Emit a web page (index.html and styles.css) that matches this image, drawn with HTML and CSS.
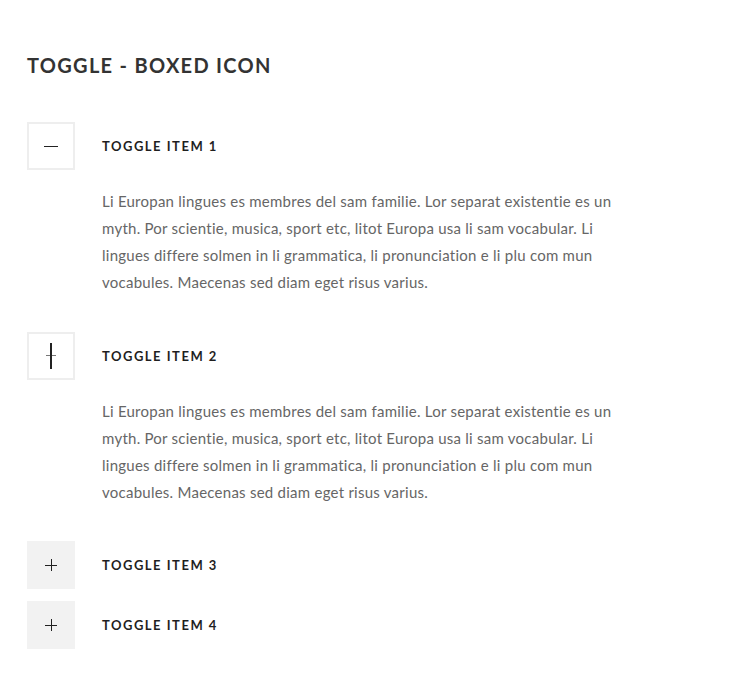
FILE: index.html
```html
<!DOCTYPE html>
<html lang="en">
<head>
<meta charset="utf-8">
<title>Toggle - Boxed Icon</title>
<link rel="stylesheet" href="styles.css">
</head>
<body>
<main class="page">
  <h2 class="heading">TOGGLE - BOXED ICON</h2>
  <div class="toggles">
    <div class="item open">
      <div class="head">
        <span class="box"><span class="icon minus"></span></span>
        <span class="title">TOGGLE ITEM 1</span>
      </div>
      <div class="content">
        <p>Li Europan lingues es membres del sam familie. Lor separat existentie es un myth. Por scientie, musica, sport etc, litot Europa usa li sam vocabular. Li lingues differe solmen in li grammatica, li pronunciation e li plu com mun vocabules. Maecenas sed diam eget risus varius.</p>
      </div>
    </div>
    <div class="item open">
      <div class="head">
        <span class="box"><span class="icon turning"></span></span>
        <span class="title">TOGGLE ITEM 2</span>
      </div>
      <div class="content">
        <p>Li Europan lingues es membres del sam familie. Lor separat existentie es un myth. Por scientie, musica, sport etc, litot Europa usa li sam vocabular. Li lingues differe solmen in li grammatica, li pronunciation e li plu com mun vocabules. Maecenas sed diam eget risus varius.</p>
      </div>
    </div>
    <div class="item">
      <div class="head">
        <span class="box"><span class="icon plus"></span></span>
        <span class="title">TOGGLE ITEM 3</span>
      </div>
    </div>
    <div class="item">
      <div class="head">
        <span class="box"><span class="icon plus"></span></span>
        <span class="title">TOGGLE ITEM 4</span>
      </div>
    </div>
  </div>
</main>
</body>
</html>
```
FILE: styles.css
```css
html, body {
  margin: 0;
  padding: 0;
  background: #ffffff;
}
body {
  font-family: Lato, "Open Sans", sans-serif;
  font-variant-ligatures: none;
}
.page {
  padding: 51px 27px 20px 27px;
}
.heading {
  margin: 0;
  font-size: 20px;
  line-height: 28px;
  font-weight: 700;
  letter-spacing: 1.3px;
  color: #333333;
}
.toggles {
  margin-top: 43px;
}
.item {
  margin-bottom: 12px;
}
.head {
  display: flex;
  align-items: center;
  gap: 27px;
}
.box {
  width: 48px;
  height: 48px;
  box-sizing: border-box;
  background: #f2f2f2;
  position: relative;
  flex: none;
}
.item.open .box {
  background: #ffffff;
  border: 2px solid #eeeeee;
}
.icon {
  position: absolute;
  left: 50%;
  top: 50%;
  width: 12px;
  height: 12px;
  transform: translate(-50%, -50%);
}
.icon::before,
.icon::after {
  content: "";
  position: absolute;
  background: #222222;
}
.icon::before {
  left: 0;
  right: 0;
  top: 50%;
  height: 1px;
  margin-top: -0.5px;
}
.icon::after {
  top: 0;
  bottom: 0;
  left: 50%;
  width: 1px;
  margin-left: -0.5px;
}
.icon.minus::after {
  display: none;
}
.icon.minus::before {
  left: -1px;
  right: -1px;
}
.icon.turning {
  height: 26px;
  width: 10px;
}
.icon.turning::before {
  background: #777777;
}
.icon.turning::after {
  width: 2px;
  margin-left: -1px;
}
.title {
  font-size: 13px;
  font-weight: 700;
  letter-spacing: 1.5px;
  color: #1f1f1f;
}
.content {
  padding: 18px 0 23.5px 75px;
}
.content p {
  margin: 0;
  max-width: 525px;
  font-size: 15px;
  line-height: 27px;
  letter-spacing: 0.25px;
  color: #666666;
}
```
